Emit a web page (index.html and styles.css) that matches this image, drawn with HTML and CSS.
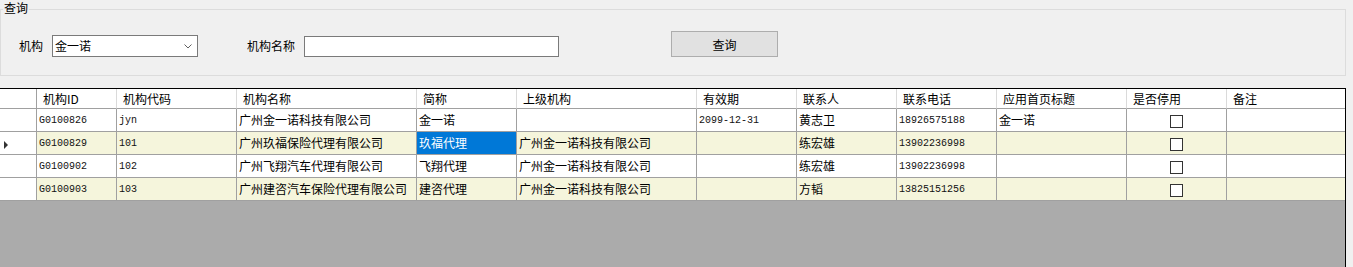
FILE: index.html
```html
<!DOCTYPE html>
<html lang="zh-CN">
  <head>
    <meta charset="UTF-8" />
    <title>机构管理</title>
    <link rel="stylesheet" href="styles.css">
  </head>
  <body>
    <div class="query">
      <span class="query-title">查询</span>
      <div class="query-row">
        <label class="lbl">机构</label>
        <div class="combo">
          <span>金一诺</span>
          <svg class="combo-arrow" width="8" height="5" viewBox="0 0 8 5">
            <path d="M0.5 0.5 L4 4 L7.5 0.5" fill="none" stroke="#606060" stroke-width="1" />
          </svg>
        </div>
        <label class="lbl lbl-name">机构名称</label>
        <input class="text-input" type="text" />
        <button class="btn">查询</button>
      </div>
    </div>
    <div class="grid">
      <table>
        <thead>
          <tr>
            <th class="rh"></th>
            <th class="c1">机构ID</th>
            <th class="c2">机构代码</th>
            <th class="c3">机构名称</th>
            <th class="c4">简称</th>
            <th class="c5">上级机构</th>
            <th class="c6">有效期</th>
            <th class="c7">联系人</th>
            <th class="c8">联系电话</th>
            <th class="c9">应用首页标题</th>
            <th class="c10">是否停用</th>
            <th class="c11 last">备注</th>
          </tr>
        </thead>
        <tbody>
          <tr>
            <td class="rh"></td>
            <td class="mono">G0100826</td>
            <td class="mono">jyn</td>
            <td>广州金一诺科技有限公司</td>
            <td>金一诺</td>
            <td></td>
            <td class="mono">2099-12-31</td>
            <td>黄志卫</td>
            <td class="mono">18926575188</td>
            <td>金一诺</td>
            <td class="check"><span class="box"></span></td>
            <td class="last"></td>
          </tr>
          <tr class="alt">
            <td class="rh"><span class="pointer"></span></td>
            <td class="mono">G0100829</td>
            <td class="mono">101</td>
            <td>广州玖福保险代理有限公司</td>
            <td class="selected">玖福代理</td>
            <td>广州金一诺科技有限公司</td>
            <td></td>
            <td>练宏雄</td>
            <td class="mono">13902236998</td>
            <td></td>
            <td class="check"><span class="box"></span></td>
            <td class="last"></td>
          </tr>
          <tr>
            <td class="rh"></td>
            <td class="mono">G0100902</td>
            <td class="mono">102</td>
            <td>广州飞翔汽车代理有限公司</td>
            <td>飞翔代理</td>
            <td>广州金一诺科技有限公司</td>
            <td></td>
            <td>练宏雄</td>
            <td class="mono">13902236998</td>
            <td></td>
            <td class="check"><span class="box"></span></td>
            <td class="last"></td>
          </tr>
          <tr class="alt">
            <td class="rh"></td>
            <td class="mono">G0100903</td>
            <td class="mono">103</td>
            <td>广州建咨汽车保险代理有限公司</td>
            <td>建咨代理</td>
            <td>广州金一诺科技有限公司</td>
            <td></td>
            <td>方韬</td>
            <td class="mono">13825151256</td>
            <td></td>
            <td class="check"><span class="box"></span></td>
            <td class="last"></td>
          </tr>
        </tbody>
      </table>
    </div>
  </body>
</html>
```

FILE: styles.css
```css
html {
  font-size: 12px;
}
body {
  margin: 0;
  height: 100vh;
  overflow: hidden;
  background-color: #f0f0f0;
  color: #000;
  font-family: "Noto Sans CJK SC", "Liberation Sans", sans-serif;
  font-size: 12px;
}

/* query group box */
.query {
  position: relative;
  box-sizing: border-box;
  width: 1346px;
  margin-top: 9px;
  border: 1px solid #dcdcdc;
}
.query-title {
  position: absolute;
  top: -10px;
  left: 2px;
  padding: 0 1px;
  line-height: 16px;
  background-color: #f0f0f0;
}
.query-row {
  display: flex;
  align-items: flex-end;
  padding: 21px 0 18px 18px;
}
.lbl {
  width: 24px;
  line-height: 22px;
  white-space: nowrap;
}
.lbl-name {
  width: 48px;
  margin-left: 49px;
}
.combo {
  box-sizing: border-box;
  display: flex;
  align-items: center;
  justify-content: space-between;
  width: 146px;
  height: 22px;
  margin-left: 9px;
  padding: 0 5px 0 2px;
  border: 1px solid #7a7a7a;
  background-color: #fff;
  line-height: 20px;
}
.combo-arrow {
  display: block;
}
.text-input {
  box-sizing: border-box;
  width: 255px;
  height: 21px;
  margin: 0 0 0 9px;
  border: 1px solid #7a7a7a;
  background-color: #fff;
  outline: none;
}
.btn {
  box-sizing: border-box;
  width: 107px;
  height: 26px;
  margin-left: 112px;
  padding: 0;
  border: 1px solid #adadad;
  background-color: #e1e1e1;
  font-family: inherit;
  font-size: 12px;
  color: #000;
}

/* data grid */
.grid {
  box-sizing: border-box;
  width: 1346px;
  height: calc(100vh - 88px);
  margin-top: 12px;
  border-top: 1px solid #000;
  border-right: 1px solid #000;
  background-color: #ababab;
}
.grid table {
  table-layout: fixed;
  width: 1345px;
  border-collapse: separate;
  border-spacing: 0;
}
.grid th {
  height: 19px;
  padding: 0 0 0 6px;
  border-right: 1px solid #dadada;
  border-bottom: 1px solid #a0a0a0;
  background-color: #fff;
  font-weight: normal;
  text-align: left;
  line-height: 19px;
  white-space: nowrap;
  overflow: hidden;
}
.grid td {
  height: 22px;
  padding: 0 0 0 2px;
  border-right: 1px solid #a0a0a0;
  border-bottom: 1px solid #a0a0a0;
  background-color: #fff;
  line-height: 22px;
  white-space: nowrap;
  overflow: hidden;
}
.grid tr.alt td {
  background-color: #f5f5dc;
}
.grid th.rh,
.grid td.rh,
.grid tr.alt td.rh {
  width: 36px;
  padding: 0;
  border-right-color: #a0a0a0;
  background-color: #fff;
}
.grid th.last,
.grid td.last {
  border-right: none;
}
.c1 { width: 73px; }
.c2 { width: 113px; }
.c3 { width: 173px; }
.c4 { width: 93px; }
.c5 { width: 173px; }
.c6 { width: 93px; }
.c7 { width: 93px; }
.c8 { width: 93px; }
.c9 { width: 123px; }
.c10 { width: 93px; }
.c11 { width: 112px; }

.grid td.mono {
  height: 21px;
  padding-top: 1px;
  line-height: 21px;
  font-family: "Liberation Mono", monospace;
  font-size: 10px;
  color: #111;
}
.grid tr td.selected {
  background-color: #0078d7;
  color: #fff;
}
.grid td.check {
  padding: 0;
  text-align: center;
}
.box {
  display: inline-block;
  box-sizing: border-box;
  width: 13px;
  height: 13px;
  border: 1px solid #333;
  background-color: #fff;
  vertical-align: middle;
}
.pointer {
  display: inline-block;
  width: 0;
  height: 0;
  margin-left: 4px;
  border-top: 4px solid transparent;
  border-bottom: 4px solid transparent;
  border-left: 4px solid #333;
  vertical-align: middle;
}
```
